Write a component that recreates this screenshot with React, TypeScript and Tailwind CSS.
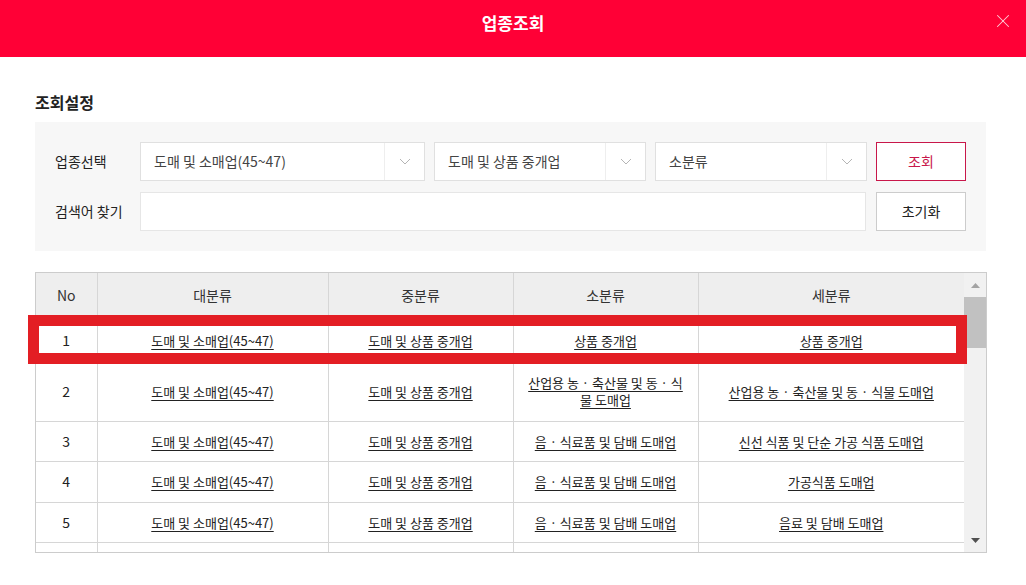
import { X } from 'lucide-react'

const rows = [
  { no: '1', a: '도매 및 소매업(45~47)', b: '도매 및 상품 중개업', c: '상품 중개업', d: '상품 중개업', h: 'h-[42px]' },
  { no: '2', a: '도매 및 소매업(45~47)', b: '도매 및 상품 중개업', c: '산업용 농 · 축산물 및 동 · 식물 도매업', d: '산업용 농 · 축산물 및 동 · 식물 도매업', h: 'h-[60px]' },
  { no: '3', a: '도매 및 소매업(45~47)', b: '도매 및 상품 중개업', c: '음 · 식료품 및 담배 도매업', d: '신선 식품 및 단순 가공 식품 도매업', h: 'h-[40px]' },
  { no: '4', a: '도매 및 소매업(45~47)', b: '도매 및 상품 중개업', c: '음 · 식료품 및 담배 도매업', d: '가공식품 도매업', h: 'h-[41px]' },
  { no: '5', a: '도매 및 소매업(45~47)', b: '도매 및 상품 중개업', c: '음 · 식료품 및 담배 도매업', d: '음료 및 담배 도매업', h: 'h-[40px]' },
  // next row only peeks in under the scroll area
  { no: '', a: '', b: '', c: '', d: '', h: 'h-[40px]' }
]

function Chevron() {
  return (
    <svg width="12" height="7" viewBox="0 0 12 7" fill="none">
      <path d="M1 1l5 5 5-5" stroke="#b5b5b5" strokeWidth="1" />
    </svg>
  )
}

function Select({ label, width }: { label: string; width: string }) {
  return (
    <div className={`${width} h-[39px] bg-white border border-[#e0e0e0] flex items-center`}>
      <span className="flex-1 pl-[13px] text-[14px] text-[#444]">{label}</span>
      <div className="w-[40px] h-full border-l border-[#eeeeee] flex items-center justify-center">
        <Chevron />
      </div>
    </div>
  )
}

export default function App() {
  return (
    <div className="w-[1026px] h-[585px] bg-white overflow-hidden font-['Noto_Sans_CJK_KR','Noto_Sans',sans-serif] text-[#222]">
      {/* Header */}
      <div className="h-[57px] bg-[#ff0036] relative flex justify-center pt-[11px]">
        <h1 className="text-white font-bold text-[17px] leading-[24px]">업종조회</h1>
        <button className="absolute right-[12px] top-[10px] text-white/80">
          <X size={22} strokeWidth={1.1} />
        </button>
      </div>

      <div className="px-[35px] pt-[33px]">
        <h2 className="font-bold text-[16px] leading-[24px] text-[#222]">조회설정</h2>

        {/* Search settings */}
        <div className="mt-[8px] w-[951px] bg-[#f7f7f7] px-[20px] py-[20px] flex flex-col gap-[11px]">
          <div className="flex items-center">
            <span className="w-[85px] text-[14px] text-[#222]">업종선택</span>
            <Select label="도매 및 소매업(45~47)" width="w-[285px]" />
            <div className="w-[9px]" />
            <Select label="도매 및 상품 중개업" width="w-[212px]" />
            <div className="w-[9px]" />
            <Select label="소분류" width="w-[212px]" />
            <div className="w-[9px]" />
            <button className="w-[90px] h-[39px] bg-white border border-[#c8174a] text-[#c8174a] text-[14px]">조회</button>
          </div>
          <div className="flex items-center">
            <span className="w-[85px] text-[14px] text-[#222]">검색어 찾기</span>
            <div className="w-[726px] h-[39px] bg-white border border-[#e6e6e6]" />
            <div className="w-[10px]" />
            <button className="w-[90px] h-[39px] bg-white border border-[#cccccc] text-[#222] text-[14px]">초기화</button>
          </div>
        </div>

        {/* Result table */}
        <div className="mt-[21px] relative w-[952px] h-[281px] border border-[#cccccc] flex">
          <div className="w-[928px] h-full overflow-hidden">
            <table className="w-[928px] table-fixed border-collapse text-[13px] text-center">
              <colgroup>
                <col className="w-[61px]" />
                <col className="w-[231px]" />
                <col className="w-[185px]" />
                <col className="w-[185px]" />
                <col className="w-[266px]" />
              </colgroup>
              <thead>
                <tr className="h-[46px] bg-[#eeeeee] text-[14px] text-[#333]">
                  <th className="font-normal border-r border-b border-[#d6d6d6]">No</th>
                  <th className="font-normal border-r border-b border-[#d6d6d6]">대분류</th>
                  <th className="font-normal border-r border-b border-[#d6d6d6]">중분류</th>
                  <th className="font-normal border-r border-b border-[#d6d6d6]">소분류</th>
                  <th className="font-normal border-b border-[#d6d6d6]">세분류</th>
                </tr>
              </thead>
              <tbody>
                {rows.map((r, i) => (
                  <tr key={i} className={r.h}>
                    <td className="border-r border-b border-[#d6d6d6] text-[14px]">{r.no}</td>
                    <td className="border-r border-b border-[#d6d6d6] px-[14px] leading-[17px]">
                      <span className="underline underline-offset-[3px]">{r.a}</span>
                    </td>
                    <td className="border-r border-b border-[#d6d6d6] px-[14px] leading-[17px]">
                      <span className="underline underline-offset-[3px]">{r.b}</span>
                    </td>
                    <td className="border-r border-b border-[#d6d6d6] px-[14px] leading-[17px]">
                      <span className="underline underline-offset-[3px]">{r.c}</span>
                    </td>
                    <td className="border-b border-[#d6d6d6] px-[14px] leading-[17px]">
                      <span className="underline underline-offset-[3px]">{r.d}</span>
                    </td>
                  </tr>
                ))}
              </tbody>
            </table>
          </div>

          {/* Scrollbar */}
          <div className="w-[22px] h-full bg-[#f1f1f1] flex flex-col items-center">
            <div className="h-[24px] w-full flex items-center justify-center">
              <svg width="9" height="5" viewBox="0 0 9 5">
                <path d="M0 5L4.5 0L9 5z" fill="#a3a3a3" />
              </svg>
            </div>
            <div className="w-full h-[51px] bg-[#c1c1c1]" />
            <div className="flex-1" />
            <div className="h-[24px] w-full flex items-center justify-center">
              <svg width="9" height="5" viewBox="0 0 9 5">
                <path d="M0 0L9 0L4.5 5z" fill="#505050" />
              </svg>
            </div>
          </div>

          {/* Highlight on first row */}
          <div className="absolute left-[-8px] top-[42px] w-[939px] h-[49px] border-[11px] border-[#e31e24] pointer-events-none" />
        </div>
      </div>
    </div>
  )
}
